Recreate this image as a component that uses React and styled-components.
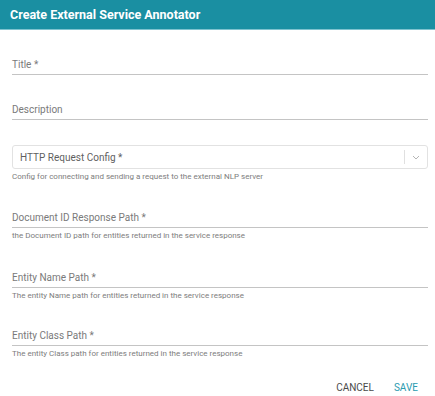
import React from "react";
import styled, { createGlobalStyle } from "styled-components";

const GlobalStyle = createGlobalStyle`
  html, body {
    margin: 0;
    padding: 0;
    background: #ffffff;
    font-family: Roboto, "Liberation Sans", sans-serif;
  }
`;

const Dialog = styled.div`
  width: 435px;
  height: 396px;
  display: flex;
  flex-direction: column;
  background: #ffffff;
  overflow: hidden;
`;

const Header = styled.div`
  flex-shrink: 0;
  height: 30px;
  background: #1a8fa2;
  border-bottom: 1px solid #7fc3cf;
  color: #ffffff;
  font-size: 12.5px;
  font-weight: 700;
  display: flex;
  align-items: center;
  padding-left: 10px;
  box-sizing: border-box;
`;

const Body = styled.div`
  flex: 1;
  padding: 0 7px 0 12px;
  display: flex;
  flex-direction: column;
`;

const Field = styled.div`
  flex-shrink: 0;
  margin-top: ${(p) => p.$top}px;
`;

const Label = styled.div`
  font-size: 10px;
  color: #7a7a7a;
  height: 17px;
  line-height: 17px;
  border-bottom: 1px solid #c4c4c4;
  padding-bottom: 1px;
`;

const Helper = styled.div`
  font-size: 8px;
  color: #7d7d7d;
  margin-top: 3px;
  line-height: 10px;
`;

const SelectBox = styled.div`
  height: 22px;
  border: 1px solid #e2e2e2;
  border-radius: 3px;
  display: flex;
  align-items: center;
  padding-left: 7px;
`;

const SelectText = styled.div`
  flex: 1;
  font-size: 10px;
  color: #5f5f5f;
`;

const Separator = styled.div`
  width: 1px;
  height: 14px;
  background: #e0e0e0;
`;

const Chevron = styled.div`
  width: 22px;
  display: flex;
  justify-content: center;
  align-items: center;
`;

const Actions = styled.div`
  margin-top: auto;
  flex-shrink: 0;
  height: 18px;
  display: flex;
  justify-content: flex-end;
  align-items: center;
  gap: 20px;
  padding-right: 10px;
`;

const Button = styled.button`
  border: none;
  background: none;
  padding: 0;
  font-family: Roboto, "Liberation Sans", sans-serif;
  font-size: 10px;
  text-transform: uppercase;
  color: ${(p) => (p.$primary ? "#2a9bb0" : "#4a4a4a")};
`;

const fields = [
  { top: 26, label: "Title *" },
  { top: 26, label: "Description" },
];

const paths = [
  {
    top: 27,
    label: "Document ID Response Path *",
    help: "the Document ID path for entities returned in the service response",
  },
  {
    top: 28,
    label: "Entity Name Path *",
    help: "The entity Name path for entities returned in the service response",
  },
  {
    top: 26,
    label: "Entity Class Path *",
    help: "The entity Class path for entities returned in the service response",
  },
];

export default function App() {
  return (
    <>
      <GlobalStyle />
      <Dialog>
        <Header>Create External Service Annotator</Header>
        <Body>
          {fields.map((f) => (
            <Field key={f.label} $top={f.top}>
              <Label>{f.label}</Label>
            </Field>
          ))}
          <Field $top={25}>
            <SelectBox>
              <SelectText>HTTP Request Config *</SelectText>
              <Separator />
              <Chevron>
                <svg width="8" height="5" viewBox="0 0 8 5">
                  <path d="M1 1 L4 4 L7 1" fill="none" stroke="#b5b5b5" strokeWidth="1" />
                </svg>
              </Chevron>
            </SelectBox>
            <Helper>Config for connecting and sending a request to the external NLP server</Helper>
          </Field>
          {paths.map((f) => (
            <Field key={f.label} $top={f.top}>
              <Label>{f.label}</Label>
              <Helper>{f.help}</Helper>
            </Field>
          ))}
          <Actions>
            <Button>Cancel</Button>
            <Button $primary>Save</Button>
          </Actions>
        </Body>
      </Dialog>
    </>
  );
}
